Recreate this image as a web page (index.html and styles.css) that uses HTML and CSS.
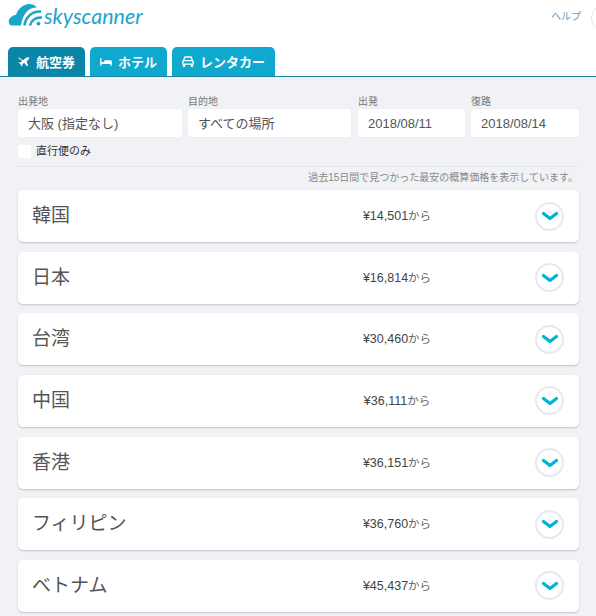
FILE: index.html
```html
<!DOCTYPE html>
<html lang="ja">
<head>
  <meta charset="UTF-8">
  <meta name="viewport" content="width=device-width, initial-scale=1.0">
  <title>Skyscanner</title>
  <link rel="stylesheet" href="styles.css">
</head>
<body>
  <header class="site-header">
    <div class="top-bar">
      <a class="logo" href="#">
        <svg class="logo-mark" width="35" height="22" viewBox="0 0 35 22">
          <path fill="#1ba5cb" d="M3 21.5C0 20.5 -.5 14.5 4 12.5C5 11.5 6.5 10.7 8 11C10 5 15 0 21 0C24 0 27 1 29 3.5C22 3 15 8 13 21.5Z"/>
          <path fill="none" stroke="#1ba5cb" stroke-width="2.6" d="M16.5 21.5C17.5 13 24 7 33 7.6"/>
          <path fill="none" stroke="#1ba5cb" stroke-width="2.6" d="M22 21.5C23 16.5 27.5 13 34 13.6"/>
          <circle cx="30.5" cy="19.6" r="1.9" fill="#1ba5cb"/>
        </svg>
        <span class="logo-text">skyscanner</span>
      </a>
      <div class="top-links">
        <a class="help" href="#">ヘルプ</a>
        <span class="account"></span>
      </div>
    </div>
    <nav class="tabs">
      <a class="tab active" href="#">
        <svg width="12" height="11" viewBox="0 0 14 12"><path fill="#fff" d="M1 1.2L6 4.4L9 2C10.4 1 12.6.9 13 1.3C13.3 1.8 12.7 3.3 11.4 4.6L10 6.4L11.8 11L10.4 11.4L7.2 7.6L5 9.4L5.2 11L4 11.4L2.6 8.6L.6 7.6L1.4 6.8L3.2 7L5 5.4L.2 2Z"/></svg>
        航空券
      </a>
      <a class="tab" href="#">
        <svg width="12" height="10" viewBox="0 0 14 12"><path fill="#fff" d="M0 1.5H1.6V6H5V4H12.4C13.3 4 14 4.7 14 5.6V10.5H12.4V8.5H1.6V10.5H0Z"/></svg>
        ホテル
      </a>
      <a class="tab" href="#">
        <svg width="12" height="11" viewBox="0 0 12 11"><path fill="none" stroke="#fff" stroke-width="1.3" d="M3 1H9L10.4 4.6C11 5 11.2 5.4 11.2 6V8.2H.8V6C.8 5.4 1 5 1.6 4.6ZM1.6 4.6H10.4"/><path fill="#fff" d="M1 8H3.2V11H1ZM8.8 8H11V11H8.8Z"/></svg>
        レンタカー
      </a>
    </nav>
  </header>

  <main class="panel">
    <form class="search">
      <div class="field field-place">
        <label>出発地</label>
        <div class="input">大阪 (指定なし)</div>
      </div>
      <div class="field field-place">
        <label>目的地</label>
        <div class="input">すべての場所</div>
      </div>
      <div class="field field-date">
        <label>出発</label>
        <div class="input">2018/08/11</div>
      </div>
      <div class="field field-date">
        <label>復路</label>
        <div class="input">2018/08/14</div>
      </div>
    </form>
    <div class="direct">
      <span class="checkbox"></span>
      <span>直行便のみ</span>
    </div>
    <p class="note">過去15日間で見つかった最安の概算価格を表示しています。</p>

    <ul class="results">
      <li class="result">
        <span class="country">韓国</span>
        <span class="price">¥14,501<small>から</small></span>
        <span class="toggle"><svg width="18" height="10" viewBox="0 0 18 10"><path d="M2.5 2.5L9 7.5L15.5 2.5" fill="none" stroke="#00b2d6" stroke-width="3.2" stroke-linecap="round" stroke-linejoin="round"/></svg></span>
      </li>
      <li class="result">
        <span class="country">日本</span>
        <span class="price">¥16,814<small>から</small></span>
        <span class="toggle"><svg width="18" height="10" viewBox="0 0 18 10"><path d="M2.5 2.5L9 7.5L15.5 2.5" fill="none" stroke="#00b2d6" stroke-width="3.2" stroke-linecap="round" stroke-linejoin="round"/></svg></span>
      </li>
      <li class="result">
        <span class="country">台湾</span>
        <span class="price">¥30,460<small>から</small></span>
        <span class="toggle"><svg width="18" height="10" viewBox="0 0 18 10"><path d="M2.5 2.5L9 7.5L15.5 2.5" fill="none" stroke="#00b2d6" stroke-width="3.2" stroke-linecap="round" stroke-linejoin="round"/></svg></span>
      </li>
      <li class="result">
        <span class="country">中国</span>
        <span class="price">¥36,111<small>から</small></span>
        <span class="toggle"><svg width="18" height="10" viewBox="0 0 18 10"><path d="M2.5 2.5L9 7.5L15.5 2.5" fill="none" stroke="#00b2d6" stroke-width="3.2" stroke-linecap="round" stroke-linejoin="round"/></svg></span>
      </li>
      <li class="result">
        <span class="country">香港</span>
        <span class="price">¥36,151<small>から</small></span>
        <span class="toggle"><svg width="18" height="10" viewBox="0 0 18 10"><path d="M2.5 2.5L9 7.5L15.5 2.5" fill="none" stroke="#00b2d6" stroke-width="3.2" stroke-linecap="round" stroke-linejoin="round"/></svg></span>
      </li>
      <li class="result">
        <span class="country">フィリピン</span>
        <span class="price">¥36,760<small>から</small></span>
        <span class="toggle"><svg width="18" height="10" viewBox="0 0 18 10"><path d="M2.5 2.5L9 7.5L15.5 2.5" fill="none" stroke="#00b2d6" stroke-width="3.2" stroke-linecap="round" stroke-linejoin="round"/></svg></span>
      </li>
      <li class="result">
        <span class="country">ベトナム</span>
        <span class="price">¥45,437<small>から</small></span>
        <span class="toggle"><svg width="18" height="10" viewBox="0 0 18 10"><path d="M2.5 2.5L9 7.5L15.5 2.5" fill="none" stroke="#00b2d6" stroke-width="3.2" stroke-linecap="round" stroke-linejoin="round"/></svg></span>
      </li>
    </ul>
  </main>
</body>
</html>
```

FILE: styles.css
```css
* {
  margin: 0;
  padding: 0;
  box-sizing: border-box;
}
html, body {
  height: 100%;
  overflow: hidden;
}
body {
  font-family: "Liberation Sans", "Noto Sans CJK JP", sans-serif;
  background-color: #f1f2f6;
  color: #444;
}
a {
  text-decoration: none;
}

/* Header */
.site-header {
  background-color: #fff;
  border-bottom: 1px solid #1b7f9f;
  height: 77px;
  padding-left: 8px;
}
.top-bar {
  display: flex;
  justify-content: space-between;
  height: 47px;
}
.logo {
  display: flex;
  align-items: flex-start;
  gap: 1px;
  padding-top: 4px;
}
.logo-text {
  font-family: "Lato", sans-serif;
  font-style: italic;
  font-size: 21.5px;
  line-height: 24px;
  color: #1ba5cb;
}
.top-links {
  display: flex;
  gap: 10px;
  margin-right: -21px;
  padding-top: 5px;
}
.help {
  font-size: 10px;
  line-height: 24px;
  color: #5f9cc0;
}
.account {
  width: 26px;
  height: 26px;
  border: 1px solid #e2e4e8;
  border-radius: 50%;
}
.tabs {
  display: flex;
  gap: 5px;
}
.tab {
  display: flex;
  align-items: center;
  justify-content: center;
  gap: 6px;
  height: 29px;
  width: 77px;
  border-radius: 5px 5px 0 0;
  background-color: #0fa8cf;
  color: #fff;
  font-size: 13px;
  font-weight: bold;
}
.tab:last-child {
  width: 103px;
}
.tab.active {
  background-color: #0b86a8;
}

/* Search form */
.panel {
  padding: 18px 17px 0 18px;
}
.search {
  display: flex;
  gap: 6px;
}
.field {
  flex-shrink: 0;
}
.field label {
  display: block;
  font-size: 10px;
  line-height: 14px;
  color: #777;
}
.field-place {
  width: 164px;
}
.field-place + .field-place {
  width: 163px;
}
.field-date {
  width: 108px;
}
.field-place + .field-date {
  width: 107px;
  margin-left: 1px;
}
.input {
  height: 28px;
  background-color: #fff;
  border-radius: 2px;
  box-shadow: 0 0 1px rgba(0, 0, 0, 0.15);
  padding-left: 10px;
  font-size: 13px;
  line-height: 29px;
  color: #555;
}
.direct {
  display: flex;
  align-items: center;
  gap: 5px;
  margin-top: 7px;
  padding-bottom: 8px;
  border-bottom: 1px solid #e4e5ea;
  font-size: 11px;
  line-height: 14px;
  color: #333;
}
.checkbox {
  width: 13px;
  height: 13px;
  background-color: #fff;
  border-radius: 2px;
}
.note {
  font-size: 10px;
  line-height: 13px;
  text-align: right;
  color: #888;
  margin: 4px 1px 6px 0;
}

/* Result rows */
.results {
  list-style: none;
  display: flex;
  flex-direction: column;
  gap: 9.65px;
}
.result {
  display: flex;
  align-items: center;
  height: 52px;
  padding: 0 15px 0 14px;
  background-color: #fff;
  border-radius: 5px;
  box-shadow: 0 1px 2px rgba(0, 0, 0, 0.2);
}
.country {
  flex: 1;
  font-size: 19px;
  line-height: 26px;
  color: #555;
}
.price {
  width: 136px;
  margin-right: 70px;
  padding-bottom: 2px;
  text-align: center;
  font-size: 12.5px;
  color: #444;
}
.price small {
  font-size: 11.5px;
  color: #666;
}
.toggle {
  display: flex;
  align-items: center;
  justify-content: center;
  width: 29px;
  height: 29px;
  border: 2px solid #e8e9ed;
  border-radius: 50%;
}
```
